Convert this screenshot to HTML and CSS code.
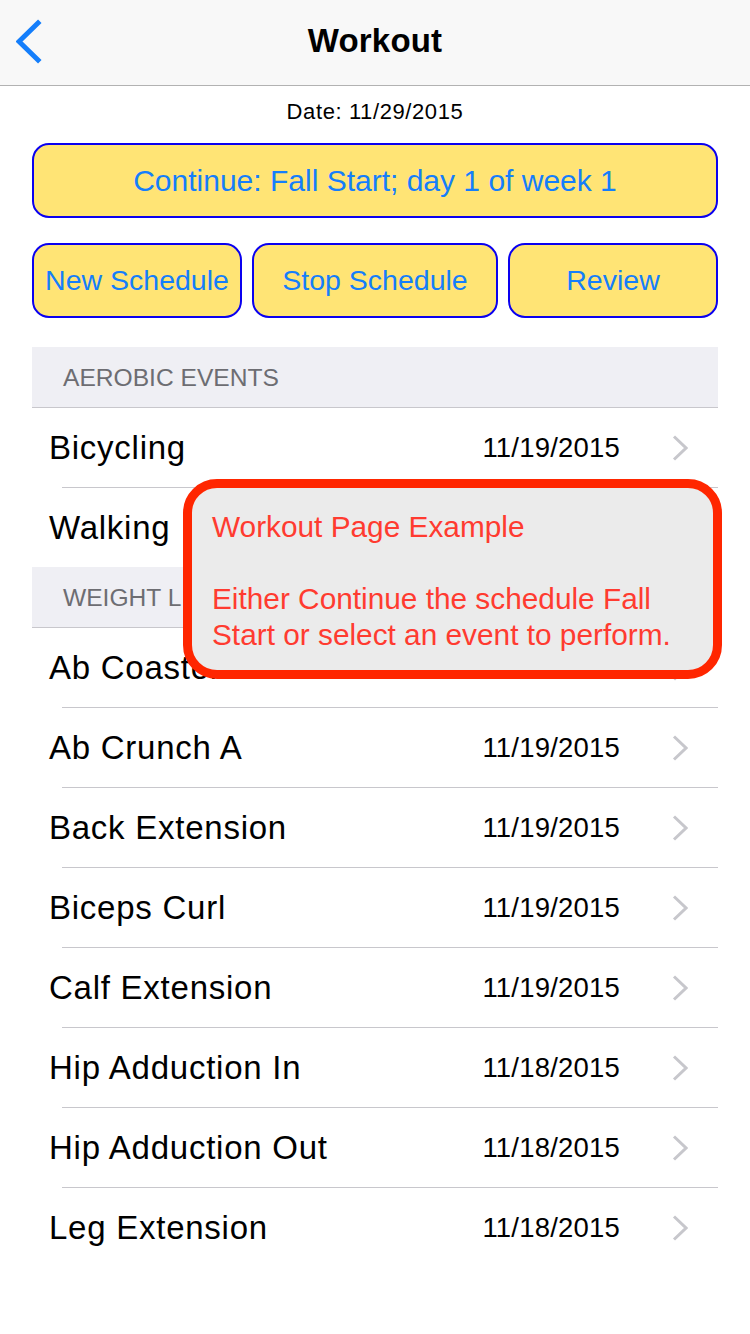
FILE: index.html
```html
<!DOCTYPE html>
<html>
<head>
<meta charset="utf-8">
<link rel="stylesheet" href="styles.css">
</head>
<body>
<div class="screen">
  <header class="nav">
    <svg class="back" width="30" height="50" viewBox="0 0 30 50"><polyline points="22,5 3,23.5 22,42" fill="none" stroke="#147efb" stroke-width="5" stroke-linecap="square"/></svg>
    <div class="nav-title">Workout</div>
  </header>
  <main class="content">
    <div class="date">Date: 11/29/2015</div>
    <button class="btn btn-wide">Continue: Fall Start; day 1 of week 1</button>
    <div class="btn-row">
      <button class="btn btn-side">New Schedule</button>
      <button class="btn btn-mid">Stop Schedule</button>
      <button class="btn btn-side">Review</button>
    </div>
    <section class="table">
      <div class="sec-head">AEROBIC EVENTS</div>
      <div class="row"><span class="name">Bicycling</span><span class="when">11/19/2015</span><svg class="chev" width="16" height="26" viewBox="0 0 16 26"><polyline points="2,1.5 14,13 2,24.5" fill="none" stroke="#c7c7cc" stroke-width="3"/></svg></div>
      <div class="row last"><span class="name">Walking</span><span class="when">11/19/2015</span><svg class="chev" width="16" height="26" viewBox="0 0 16 26"><polyline points="2,1.5 14,13 2,24.5" fill="none" stroke="#c7c7cc" stroke-width="3"/></svg></div>
      <div class="sec-head">WEIGHT LIFTING</div>
      <div class="row"><span class="name">Ab Coaster</span><span class="when">11/19/2015</span><svg class="chev" width="16" height="26" viewBox="0 0 16 26"><polyline points="2,1.5 14,13 2,24.5" fill="none" stroke="#c7c7cc" stroke-width="3"/></svg></div>
      <div class="row"><span class="name">Ab Crunch A</span><span class="when">11/19/2015</span><svg class="chev" width="16" height="26" viewBox="0 0 16 26"><polyline points="2,1.5 14,13 2,24.5" fill="none" stroke="#c7c7cc" stroke-width="3"/></svg></div>
      <div class="row"><span class="name">Back Extension</span><span class="when">11/19/2015</span><svg class="chev" width="16" height="26" viewBox="0 0 16 26"><polyline points="2,1.5 14,13 2,24.5" fill="none" stroke="#c7c7cc" stroke-width="3"/></svg></div>
      <div class="row"><span class="name">Biceps Curl</span><span class="when">11/19/2015</span><svg class="chev" width="16" height="26" viewBox="0 0 16 26"><polyline points="2,1.5 14,13 2,24.5" fill="none" stroke="#c7c7cc" stroke-width="3"/></svg></div>
      <div class="row"><span class="name">Calf Extension</span><span class="when">11/19/2015</span><svg class="chev" width="16" height="26" viewBox="0 0 16 26"><polyline points="2,1.5 14,13 2,24.5" fill="none" stroke="#c7c7cc" stroke-width="3"/></svg></div>
      <div class="row"><span class="name">Hip Adduction In</span><span class="when">11/18/2015</span><svg class="chev" width="16" height="26" viewBox="0 0 16 26"><polyline points="2,1.5 14,13 2,24.5" fill="none" stroke="#c7c7cc" stroke-width="3"/></svg></div>
      <div class="row"><span class="name">Hip Adduction Out</span><span class="when">11/18/2015</span><svg class="chev" width="16" height="26" viewBox="0 0 16 26"><polyline points="2,1.5 14,13 2,24.5" fill="none" stroke="#c7c7cc" stroke-width="3"/></svg></div>
      <div class="row last"><span class="name">Leg Extension</span><span class="when">11/18/2015</span><svg class="chev" width="16" height="26" viewBox="0 0 16 26"><polyline points="2,1.5 14,13 2,24.5" fill="none" stroke="#c7c7cc" stroke-width="3"/></svg></div>
    </section>
  </main>
  <div class="callout">
    <p>Workout Page Example</p>
    <p>Either Continue the schedule Fall<br>Start or select an event to perform.</p>
  </div>
</div>
</body>
</html>
```

FILE: styles.css
```css
* { box-sizing: border-box; }
html, body { margin: 0; padding: 0; background: #fff; }
body { font-family: "Liberation Sans", Arial, sans-serif; color: #000; }
.screen { position: relative; width: 750px; height: 1334px; overflow: hidden; background: #fff; }

.nav {
  height: 86px;
  background: #f8f8f8;
  border-bottom: 1px solid #b2b2b2;
  display: flex;
  align-items: center;
  justify-content: center;
  position: relative;
}
.back { position: absolute; left: 16px; top: 18px; }
.nav-title { font-size: 33px; font-weight: bold; letter-spacing: 0.2px; margin-top: -3px; }

.content { padding: 0 32px; }
.date {
  font-size: 22px;
  line-height: 26px;
  text-align: center;
  padding-top: 13px;
  letter-spacing: 0.6px;
}

.btn {
  font-family: "Liberation Sans", Arial, sans-serif;
  background: #ffe475;
  border: 2px solid #0a00f0;
  border-radius: 17px;
  color: #157efb;
  height: 75px;
  padding: 0;
  display: flex;
  align-items: center;
  justify-content: center;
}
.btn-wide { width: 100%; margin-top: 18px; font-size: 30px; }
.btn-row { display: flex; gap: 10px; margin-top: 25px; }
.btn-side { width: 210px; font-size: 28.5px; }
.btn-mid { width: 246px; font-size: 28.5px; }

.table { margin-top: 29px; }
.sec-head {
  height: 61px;
  background: #efeff4;
  border-bottom: 1px solid #c8c7cc;
  color: #6d6d72;
  font-size: 24.6px;
  padding-left: 31px;
  display: flex;
  align-items: center;
  padding-top: 2px;
}
.row {
  height: 80px;
  display: flex;
  align-items: center;
  padding-left: 17px;
  padding-right: 30px;
  position: relative;
}
.row::after {
  content: "";
  position: absolute;
  left: 30px;
  right: 0;
  bottom: 0;
  height: 1px;
  background: #c8c7cc;
}
.row.last { height: 79px; }
.row.last::after { display: none; }
.name { flex: 1; font-size: 33px; letter-spacing: 0.75px; }
.when { font-size: 27.5px; letter-spacing: 0.2px; }
.chev { margin-left: 52px; display: block; }

.callout {
  position: absolute;
  left: 183px;
  top: 479px;
  width: 539px;
  height: 200px;
  border: 9px solid #ff2600;
  border-radius: 34px;
  background: #ebebeb;
  color: #ff3b30;
  font-size: 29.8px;
  line-height: 36px;
  padding: 21px 0 0 20px;
  white-space: nowrap;
}
.callout p { margin: 0 0 36px 0; }
.callout p:last-child { margin-bottom: 0; }
```
